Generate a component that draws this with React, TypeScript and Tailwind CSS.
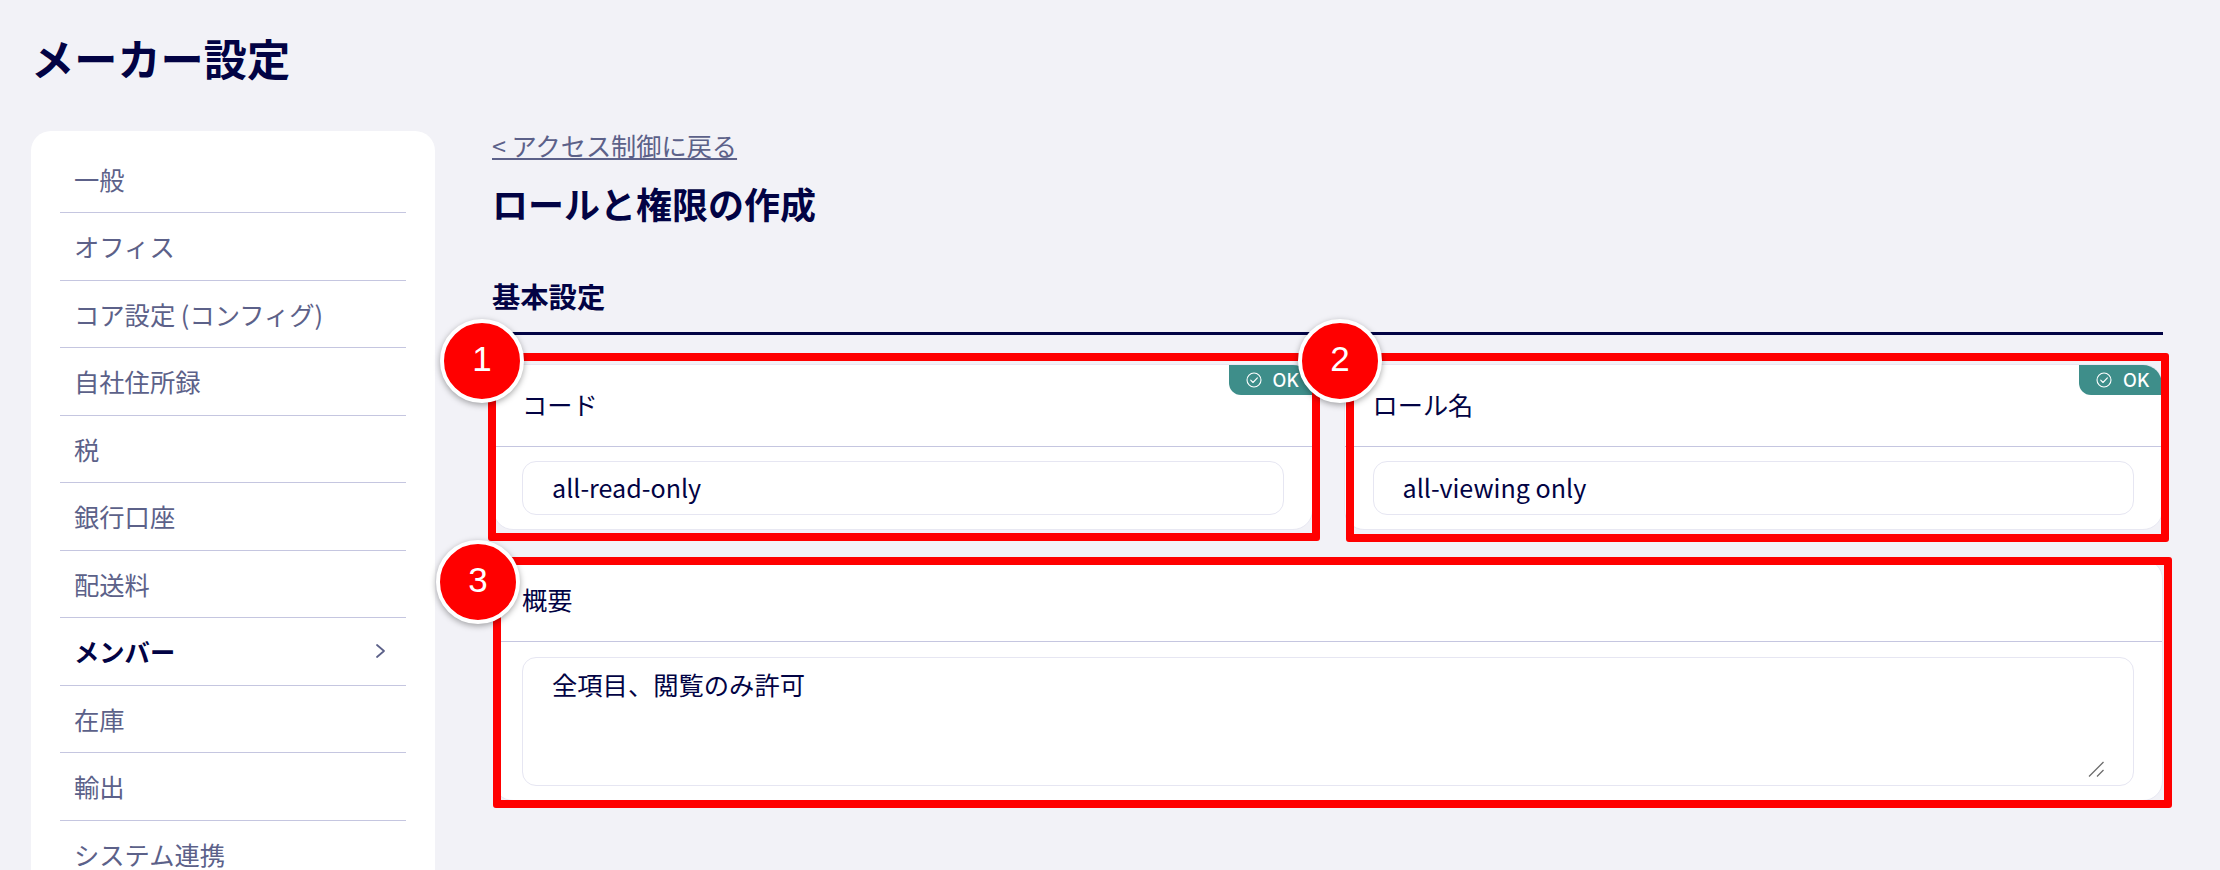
const items = ["一般", "オフィス", "コア設定 (コンフィグ)", "自社住所録", "税", "銀行口座", "配送料", "メンバー", "在庫", "輸出", "システム連携"];

function OkBadge() {
  return (
    <div className="absolute right-0 top-0 flex h-[30px] w-[83px] items-center rounded-tr-[19px] rounded-bl-[12px] bg-[#3e8e8a] pl-[17px] text-white">
      <svg width="16" height="16" viewBox="0 0 16 16" fill="none" stroke="currentColor" strokeWidth="1.1" strokeLinecap="round" strokeLinejoin="round">
        <circle cx="8" cy="8" r="7" />
        <path d="M4.7 8.2l2.3 2.3 4.4-4.6" />
      </svg>
      <span className="ml-[11px] pt-[1px] font-['Inter',sans-serif] text-[18px] font-medium leading-none tracking-[0.4px]">OK</span>
    </div>
  );
}

function Field({ label, value, ok }: { label: string; value: string; ok?: boolean }) {
  return (
    <div className="relative rounded-[20px] border border-[#e8e8f2] bg-white">
      {ok && <OkBadge />}
      <div className="flex h-[82px] items-center border-b border-[#c5c6e0] pb-[2px] pl-[28px] text-[25.2px] text-[#020344]">{label}</div>
      <div className="px-[28px] pt-[14px] pb-[14px]">
        <input
          readOnly
          value={value}
          className="block h-[54px] w-full rounded-[14px] border border-[#e6e6f2] bg-white pl-[29px] pr-[30px] pb-[2px] text-[25.1px] text-[#020344] outline-none"
        />
      </div>
    </div>
  );
}

function Marker({ n, className }: { n: number; className: string }) {
  return (
    <div
      className={`absolute flex h-[84px] w-[84px] items-center justify-center rounded-full border-[4px] border-white bg-[#ff0000] pb-[5px] font-['Liberation_Sans',sans-serif] text-[35px] leading-none text-white shadow-[0_2px_6px_rgba(0,0,0,0.35)] ${className}`}
    >
      {n}
    </div>
  );
}

export default function App() {
  return (
    <div className="relative h-[870px] w-[2220px] overflow-hidden bg-[#f2f2f7] font-['Noto_Sans_CJK_JP',sans-serif] text-[#020344]">
      <div className="h-[131px] pl-[31px] pt-[28px]">
        <h1 className="text-[43.2px] font-bold leading-[58px]">メーカー設定</h1>
      </div>
      <div className="flex items-start">
        <nav className="ml-[31px] w-[404px] shrink-0 rounded-[20px] bg-white px-[29px] pt-[14.5px] pb-[20px]">
          {items.map((t) => {
            const active = t === "メンバー";
            return (
              <div
                key={t}
                className={`flex h-[67.5px] items-center justify-between border-b border-[#c5c6e0] pl-[14px] pr-[20px] text-[25.3px] leading-[30px] ${active ? "font-bold text-[#020344]" : "text-[#5c6189]"}`}
              >
                <span>{t}</span>
                {active && (
                  <svg width="11" height="16" viewBox="0 0 11 16" fill="none" stroke="#5c6189" strokeWidth="1.8" strokeLinecap="round" strokeLinejoin="round">
                    <path d="M2 2l7 6-7 6" />
                  </svg>
                )}
              </div>
            );
          })}
        </nav>
        <main className="ml-[58px] w-[1670px] shrink-0">
          <a className="-mt-[3px] -ml-[1px] block text-[25.2px] leading-[34px] text-[#5c6189] underline">&lt; アクセス制御に戻る</a>
          <h2 className="mt-[16px] -ml-[1px] text-[36px] font-bold leading-[50px]">ロールと権限の作成</h2>
          <h3 className="mt-[48px] border-b-[3px] border-[#020344] pb-[16px] text-[28.3px] font-bold leading-[40px]"><span className="-ml-[1px]">基本設定</span></h3>
          <div className="mt-[29px] grid grid-cols-2 gap-x-[31px]">
            <Field label="コード" value="all-read-only" ok />
            <Field label="ロール名" value="all-viewing only" ok />
            <div className="col-span-2 mt-[29px] rounded-[20px] border border-[#e8e8f2] bg-white">
              <div className="flex h-[82px] items-center border-b border-[#c5c6e0] pb-[2px] pl-[28px] text-[25.2px]">概要</div>
              <div className="px-[28px] pt-[15px] pb-[14px]">
                <div className="relative h-[129px] rounded-[14px] border border-[#e6e6f2] bg-white pl-[29px] pr-[28px] pb-[8px] pt-[7px]">
                  <textarea
                    readOnly
                    defaultValue="全項目、閲覧のみ許可"
                    className="block h-full w-full resize-none bg-transparent text-[25.3px] leading-[38px] text-[#020344] outline-none"
                  />
                  <svg className="absolute bottom-[8px] right-[29px]" width="16" height="16" viewBox="0 0 16 16" fill="none" stroke="#6b6b6b" strokeWidth="1.3">
                    <path d="M1 15.5L15.5 1" />
                    <path d="M9 15.5L15.5 9" />
                  </svg>
                </div>
              </div>
            </div>
          </div>
        </main>
      </div>

      <div className="absolute left-[488px] top-[353px] h-[188px] w-[832px] rounded-[3px] border-[8px] border-[#ff0000]" />
      <div className="absolute left-[1346px] top-[353px] h-[189px] w-[823px] rounded-[3px] border-[8px] border-[#ff0000]" />
      <div className="absolute left-[493px] top-[557px] h-[251px] w-[1679px] rounded-[3px] border-[8px] border-[#ff0000]" />
      <Marker n={1} className="left-[440px] top-[319px]" />
      <Marker n={2} className="left-[1298px] top-[319px]" />
      <Marker n={3} className="left-[436px] top-[540px]" />
    </div>
  );
}
